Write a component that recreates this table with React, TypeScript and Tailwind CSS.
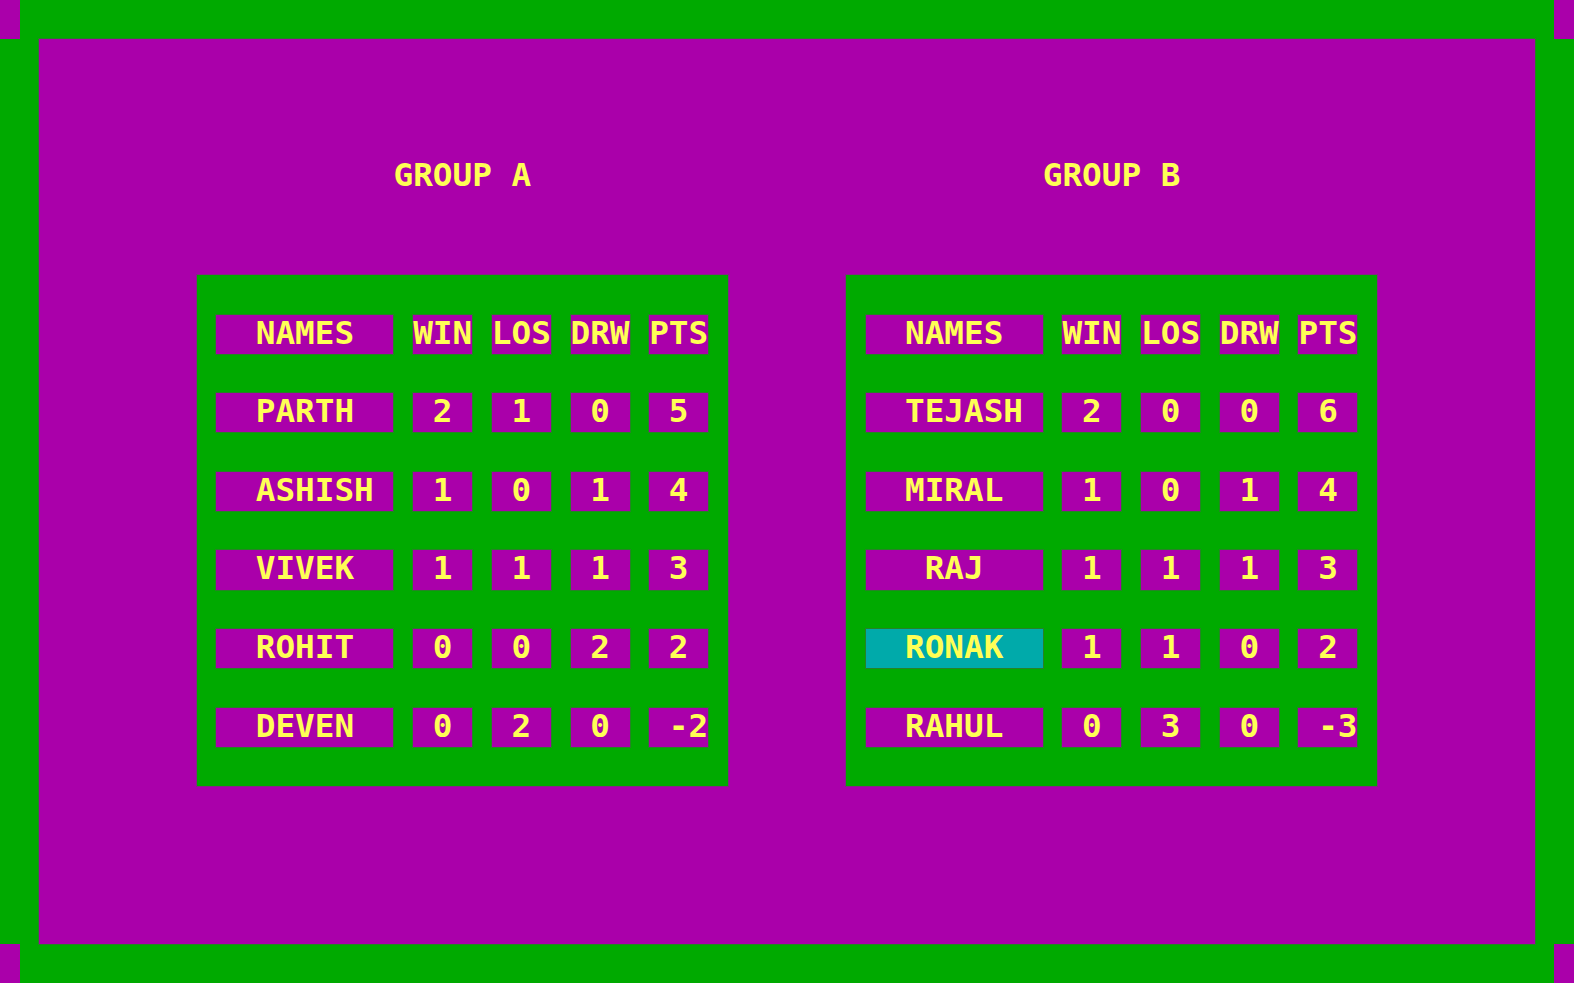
import React from "react";

type Row = { name: string; hl?: boolean; vals: string[] };

const groupA: Row[] = [
  { name: "  PARTH", vals: [" 2", " 1", " 0", " 5"] },
  { name: "  ASHISH", vals: [" 1", " 0", " 1", " 4"] },
  { name: "  VIVEK", vals: [" 1", " 1", " 1", " 3"] },
  { name: "  ROHIT", vals: [" 0", " 0", " 2", " 2"] },
  { name: "  DEVEN", vals: [" 0", " 2", " 0", " -2"] },
];

const groupB: Row[] = [
  { name: "  TEJASH", vals: [" 2", " 0", " 0", " 6"] },
  { name: "  MIRAL", vals: [" 1", " 0", " 1", " 4"] },
  { name: "   RAJ", vals: [" 1", " 1", " 1", " 3"] },
  { name: "  RONAK", hl: true, vals: [" 1", " 1", " 0", " 2"] },
  { name: "  RAHUL", vals: [" 0", " 3", " 0", " -3"] },
];

const cellText =
  "h-[39.32px] leading-[36.6px] whitespace-pre text-[#FFFF55] shadow-[0_0_0_1px_rgba(85,85,85,0.45)]";

function NameCell({ text, hl }: { text: string; hl?: boolean }) {
  return (
    <div
      className={`w-[177.075px] ${cellText} ${hl ? "bg-[#00AAAA]" : "bg-[#AA00AA]"}`}
    >
      {text}
    </div>
  );
}

function NumCell({ text }: { text: string }) {
  return <div className={`w-[59.025px] bg-[#AA00AA] ${cellText}`}>{text}</div>;
}

function Table({ title, rows }: { title: string; rows: Row[] }) {
  return (
    <div className="flex flex-col">
      <div className="ml-[196.75px] h-[39.32px] leading-[36.6px] whitespace-pre text-[#FFFF55]">
        {title}
      </div>
      <div className="mt-[78.64px] w-[531.225px] bg-[#00AA00] px-[19.675px] py-[39.32px] flex flex-col gap-y-[39.32px] shadow-[0_0_0_1px_rgba(85,85,85,0.45)]">
        <div className="flex gap-x-[19.675px]">
          <NameCell text="  NAMES" />
          <NumCell text="WIN" />
          <NumCell text="LOS" />
          <NumCell text="DRW" />
          <NumCell text="PTS" />
        </div>
        {rows.map((r) => (
          <div key={r.name} className="flex gap-x-[19.675px]">
            <NameCell text={r.name} hl={r.hl} />
            {r.vals.map((v, i) => (
              <NumCell key={i} text={v} />
            ))}
          </div>
        ))}
      </div>
    </div>
  );
}

export default function App() {
  return (
    <div
      className="w-[1574px] h-[983px] flex flex-col bg-[#00AA00] overflow-hidden font-bold text-[32.68px]"
      style={{ fontFamily: '"DejaVu Sans Mono", "Liberation Mono", monospace' }}
    >
      <div className="h-[39.32px] flex">
        <div className="w-[19.675px] bg-[#AA00AA]" />
        <div className="flex-1" />
        <div className="w-[19.675px] bg-[#AA00AA]" />
      </div>
      <div className="flex-1 flex">
        <div className="w-[39.35px]" />
        <div className="flex-1 bg-[#AA00AA] pt-[117.96px] pl-[157.4px] flex items-start gap-x-[118.05px] shadow-[0_0_0_1px_rgba(85,85,85,0.45)]">
          <Table title="GROUP A" rows={groupA} />
          <Table title="GROUP B" rows={groupB} />
        </div>
        <div className="w-[39.35px]" />
      </div>
      <div className="h-[39.32px] flex">
        <div className="w-[19.675px] bg-[#AA00AA]" />
        <div className="flex-1" />
        <div className="w-[19.675px] bg-[#AA00AA]" />
      </div>
    </div>
  );
}
